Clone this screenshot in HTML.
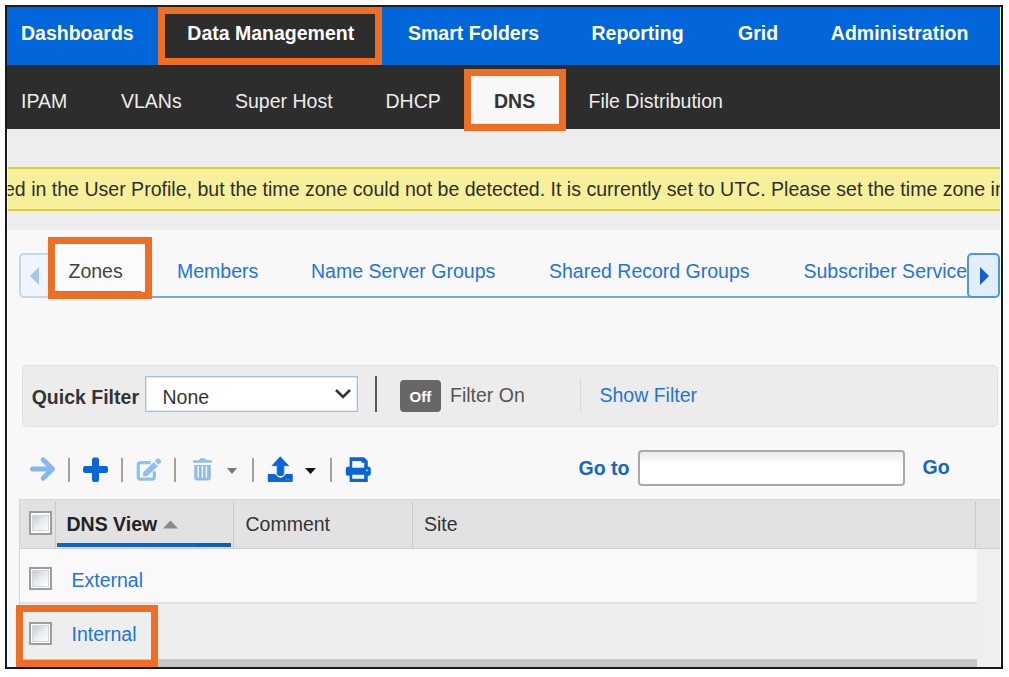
<!DOCTYPE html>
<html><head><meta charset="utf-8">
<style>
*{box-sizing:border-box;margin:0;padding:0}
html,body{width:1009px;height:677px;overflow:hidden;background:#fff}
body{position:relative;font-family:"Liberation Sans",sans-serif;font-size:19.5px;line-height:1}
.a{position:absolute}
.t{position:absolute;white-space:nowrap;line-height:1}
.b{font-weight:bold}
.frame{left:5px;top:5px;width:998px;height:664px;border:2px solid #141b1f;background:#fff}
.ob{position:absolute;border:7px solid #f06e24}
</style></head>
<body>
<div class="a frame"></div>
<!-- top nav -->
<div class="a" style="left:7px;top:7px;width:993px;height:58px;background:#0066d9"></div>
<div class="a" style="left:158px;top:7px;width:224px;height:58px;background:#2d2d2d"></div>
<div class="t b" style="left:21px;top:23.5px;color:#fff">Dashboards</div>
<div class="t b" style="left:187.3px;top:23.5px;color:#fff">Data Management</div>
<div class="t b" style="left:408px;top:23.5px;color:#fff">Smart Folders</div>
<div class="t b" style="left:591.5px;top:23.5px;color:#fff">Reporting</div>
<div class="t b" style="left:738px;top:23.5px;color:#fff">Grid</div>
<div class="t b" style="left:830.8px;top:23.5px;color:#fff">Administration</div>
<!-- sub nav -->
<div class="a" style="left:7px;top:65px;width:993px;height:64px;background:#2d2d2d"></div>
<div class="a" style="left:7px;top:65px;width:993px;height:1px;background:#1f2529"></div>
<div class="a" style="left:464px;top:69px;width:102px;height:62px;background:#f8f8f8"></div>
<div class="t" style="left:21px;top:91.5px;color:#ececec">IPAM</div>
<div class="t" style="left:121px;top:91.5px;color:#ececec">VLANs</div>
<div class="t" style="left:235px;top:91.5px;color:#ececec">Super Host</div>
<div class="t" style="left:385.5px;top:91.5px;color:#ececec">DHCP</div>
<div class="t b" style="left:494px;top:91.5px;color:#333">DNS</div>
<div class="t" style="left:588.5px;top:91.5px;color:#ececec">File Distribution</div>
<!-- gray area + banner -->
<div class="a" style="left:7px;top:129px;width:993px;height:101px;background:#ededed"></div>
<div class="a" style="left:7px;top:167px;width:993px;height:44px;background:#f6f09a;border-top:2px solid #dbcd3c;border-bottom:2px solid #dbcd3c;overflow:hidden">
  <div class="t" style="left:-3px;top:10.7px;color:#2e2e2e;font-size:19.56px">ed in the User Profile, but the time zone could not be detected. It is currently set to UTC. Please set the time zone in the User Profile.</div>
</div>
<!-- content -->
<div class="a" style="left:7px;top:230px;width:993px;height:437px;background:#f8f8f8"></div>
<!-- tabs -->
<div class="a" style="left:57px;top:296px;width:920px;height:2px;background:#6eabe8"></div>
<div class="a" style="left:19px;top:253px;width:33px;height:45px;background:#eef5fc;border:2px solid #c2d8ec;border-radius:5px"></div>
<svg class="a" style="left:29px;top:267px" width="11" height="18"><path d="M10 0 L1 9 L10 18 Z" fill="#a3c6ea"/></svg>
<div class="a" style="left:55px;top:244px;width:90px;height:48px;background:#fbfbfb"></div>
<div class="a" style="left:55px;top:291px;width:86px;height:2px;background:#4a8ee0"></div>
<div class="t" style="left:68.5px;top:261.5px;color:#444">Zones</div>
<div class="t" style="left:177px;top:261.5px;color:#1f73e0">Members</div>
<div class="t" style="left:311px;top:261.5px;color:#1f73e0">Name Server Groups</div>
<div class="t" style="left:549px;top:261.5px;color:#1f73e0">Shared Record Groups</div>
<div class="a" style="left:7px;top:240px;width:960px;height:50px;overflow:hidden">
  <div class="t" style="left:796.5px;top:21.5px;color:#1f73e0">Subscriber Services</div>
</div>
<div class="a" style="left:967px;top:253px;width:33px;height:45px;background:#e2eefc;border:2px solid #4f95e3;border-radius:5px"></div>
<svg class="a" style="left:979px;top:267px" width="11" height="18"><path d="M1 0 L10 9 L1 18 Z" fill="#0b62d6"/></svg>
<!-- filter bar -->
<div class="a" style="left:22px;top:365px;width:976px;height:62px;background:#ececec;border:1px solid #dedede;border-radius:5px"></div>
<div class="t b" style="left:31.7px;top:388px;color:#333">Quick Filter</div>
<div class="a" style="left:145px;top:376px;width:213px;height:36px;background:#fff;border:1px solid #9fc2ee;box-shadow:inset 0 0 0 1px #dce9f8"></div>
<div class="t" style="left:162.5px;top:387.5px;color:#333">None</div>
<svg class="a" style="left:334px;top:388px" width="18" height="12"><path d="M2 2 L9 9 L16 2" fill="none" stroke="#333" stroke-width="2.6"/></svg>
<div class="a" style="left:375px;top:376px;width:2px;height:36px;background:#555"></div>
<div class="a" style="left:400px;top:380px;width:41px;height:32px;background:#676767;border-radius:4px"></div>
<div class="t b" style="left:409.5px;top:388.5px;color:#fff;font-size:15px">Off</div>
<div class="t" style="left:450px;top:385.5px;color:#555">Filter On</div>
<div class="a" style="left:580px;top:379px;width:1px;height:33px;background:#d6d6d6"></div>
<div class="t" style="left:599.5px;top:385.5px;color:#1f73e0">Show Filter</div>
<!-- toolbar -->
<svg class="a" style="left:28px;top:455px" width="30" height="28"><path d="M4.6 14 H24.5 M15.2 4.8 L24.5 14 L15.2 23.2" fill="none" stroke="#85b8ee" stroke-width="5" stroke-linecap="round" stroke-linejoin="round"/></svg>
<div class="a" style="left:68px;top:458px;width:2px;height:24px;background:#a8a294"></div>
<svg class="a" style="left:82px;top:456px" width="28" height="28"><rect x="1" y="10" width="25" height="7" rx="2.2" fill="#0a66d8"/><rect x="10" y="1.4" width="7" height="24.5" rx="2.2" fill="#0a66d8"/></svg>
<div class="a" style="left:121px;top:458px;width:2px;height:24px;background:#a8a294"></div>
<svg class="a" style="left:132px;top:454px" width="34" height="30"><path d="M18.6 8.7 H8.75 Q6.25 8.7 6.25 11.2 V22.7 Q6.25 25.2 8.75 25.2 H19.8 Q22.3 25.2 22.3 22.7 V17.3" fill="none" stroke="#8fbfee" stroke-width="3.2"/><path d="M11.3 18.6 L21.7 8.4 L25.5 12.2 L15.1 21.9 L11.8 21.9 Q11.3 21.9 11.3 21.4 Z" fill="#8fbfee" stroke="#8fbfee" stroke-width="0.6" stroke-linejoin="round"/><rect x="-2.3" y="-2.8" width="4.6" height="5.6" rx="1.5" fill="#8fbfee" transform="translate(26.2 7.3) rotate(-45)"/></svg>
<div class="a" style="left:174px;top:458px;width:2px;height:24px;background:#a8a294"></div>
<svg class="a" style="left:188px;top:454px" width="30" height="30"><rect x="4.9" y="6.2" width="19.2" height="2.5" rx="1.2" fill="#8ebde9"/><path d="M10.6 6.6 L11.9 4.7 Q12.2 4.2 12.8 4.2 H16.3 Q16.9 4.2 17.2 4.7 L18.5 6.6 Z" fill="#8ebde9"/><path d="M6.2 10.9 H22.8 V23.6 Q22.8 26.6 19.8 26.6 H9.2 Q6.2 26.6 6.2 23.6 Z" fill="#8ebde9"/><path d="M10.2 12.6 V23.3 M14.4 12.6 V23.3 M18.4 12.6 V23.3" stroke="#eef5fc" stroke-width="1.5" stroke-linecap="round"/></svg>
<svg class="a" style="left:227px;top:468px" width="10" height="6"><path d="M0 0 H10 L5 6 Z" fill="#777"/></svg>
<div class="a" style="left:252px;top:458px;width:2px;height:24px;background:#a8a294"></div>
<svg class="a" style="left:264px;top:454px" width="32" height="32"><path d="M16.3 2.8 L24.6 11.7 H19.8 V19.5 Q19.8 21.5 17.8 21.5 H15.2 Q13.2 21.5 13.2 19.5 V11.7 H8 Z" fill="#0a66d9" stroke="#0a66d9" stroke-width="0.8" stroke-linejoin="round"/><path d="M4.6 20.1 H10.6 Q11.6 20.1 12.2 21.1 Q13.6 23.7 16.5 23.7 Q19.4 23.7 20.8 21.1 Q21.4 20.1 22.4 20.1 H28 Q28.8 20.1 28.8 20.9 V27.1 Q28.8 27.9 28 27.9 H4.6 Q3.8 27.9 3.8 27.1 V20.9 Q3.8 20.1 4.6 20.1 Z" fill="#0a66d9"/><circle cx="22.6" cy="25.7" r="0.8" fill="#5d9be6"/><circle cx="24.9" cy="25.7" r="0.8" fill="#5d9be6"/></svg>
<svg class="a" style="left:305px;top:468px" width="11" height="6"><path d="M0 0 H11 L5.5 6 Z" fill="#111"/></svg>
<div class="a" style="left:330px;top:458px;width:2px;height:24px;background:#a8a294"></div>
<svg class="a" style="left:342px;top:454px" width="32" height="32"><path fill="#0a66d8" fill-rule="evenodd" d="M7.6 3.3 H22.2 L25.8 7.1 V12.8 H26.8 Q28.8 12.8 28.8 14.8 V19.7 Q28.8 21.7 26.8 21.7 H25.8 V27.9 H7.6 V21.7 H5.8 Q3.8 21.7 3.8 19.7 V14.8 Q3.8 12.8 5.8 12.8 H7.6 Z M10.2 6.9 H19.4 V8.7 H22.2 V13.7 H10.2 Z M10.2 20.8 H22.2 V24.8 H10.2 Z"/><ellipse cx="25" cy="16.4" rx="1.3" ry="0.8" fill="#a9cbf3"/></svg>
<div class="t b" style="left:578.5px;top:458.5px;color:#1166c6">Go to</div>
<div class="a" style="left:638px;top:450px;width:267px;height:36px;background:linear-gradient(#e9ebec,#fff 40%);border:2px solid #a9a9a9;border-radius:4px"></div>
<div class="t b" style="left:922.5px;top:458px;color:#1166c6">Go</div>
<!-- grid -->
<div class="a" style="left:19px;top:499px;width:981px;height:168px;background:#f8f8f8;border-left:1px solid #d6d6d6;border-top:1px solid #d6d6d6"></div>
<div class="a" style="left:20px;top:500px;width:980px;height:49px;background:#e2e2e2;border-bottom:1px solid #d0d0d0"></div>
<div class="a" style="left:28.5px;top:511px;width:23.5px;height:23.5px;border:2px solid #9d9d9d;background:#fbfbfb;padding:1.5px"><div style="width:100%;height:100%;border:1px solid #d4d6da;background:linear-gradient(135deg,#c3c9d3,#e9ecf0 50%,#fdfdfd)"></div></div>
<div class="a" style="left:55px;top:502px;width:1px;height:47px;background:#c9c9c9"></div>
<div class="t b" style="left:66.5px;top:515px;color:#222">DNS View</div>
<svg class="a" style="left:163px;top:520px" width="15" height="9"><path d="M0 8.5 L7.5 0.5 L15 8.5 Z" fill="#8a8a8a"/></svg>
<div class="a" style="left:57px;top:543px;width:174px;height:4px;background:#0a66d8"></div>
<div class="a" style="left:196px;top:543px;width:35px;height:4px;background:#0b5ec4"></div>
<div class="a" style="left:233px;top:502px;width:1px;height:47px;background:#c9c9c9"></div>
<div class="t" style="left:245.5px;top:515px;color:#333">Comment</div>
<div class="a" style="left:412px;top:502px;width:1px;height:47px;background:#c9c9c9"></div>
<div class="t" style="left:424px;top:515px;color:#333">Site</div>
<div class="a" style="left:975px;top:502px;width:1px;height:47px;background:#c9c9c9"></div>
<!-- rows -->
<div class="a" style="left:20px;top:549px;width:957px;height:53px;background:#f9f9f9"></div>
<div class="a" style="left:20px;top:602px;width:957px;height:2px;background:#e2e2e2"></div>
<div class="a" style="left:20px;top:604px;width:957px;height:55px;background:#eeeeee"></div>
<div class="a" style="left:20px;top:659px;width:957px;height:8px;background:#c6c6c6"></div>
<div class="a" style="left:977px;top:549px;width:23px;height:118px;background:#efefef"></div>
<div class="a" style="left:28.5px;top:566.5px;width:23.5px;height:23.5px;border:2px solid #9d9d9d;background:#fbfbfb;padding:1.5px"><div style="width:100%;height:100%;border:1px solid #d4d6da;background:linear-gradient(135deg,#c3c9d3,#e9ecf0 50%,#fdfdfd)"></div></div>
<div class="t" style="left:71.5px;top:570.5px;color:#1f73e0">External</div>
<div class="a" style="left:28.5px;top:621.5px;width:23.5px;height:23.5px;border:2px solid #9d9d9d;background:#fbfbfb;padding:1.5px"><div style="width:100%;height:100%;border:1px solid #d4d6da;background:linear-gradient(135deg,#c3c9d3,#e9ecf0 50%,#fdfdfd)"></div></div>
<div class="t" style="left:71.5px;top:625px;color:#1f73e0">Internal</div>
<div class="a" style="left:7px;top:129px;width:1px;height:538px;background:rgba(255,255,255,0.7)"></div>
<!-- frame border on top -->
<div class="a" style="left:5px;top:5px;width:998px;height:664px;border:2px solid #141b1f;border-top-color:#1c2124"></div>
<div class="a" style="left:1000px;top:7px;width:1px;height:660px;background:#fff"></div>
<!-- orange highlight boxes -->
<div class="ob" style="left:158px;top:7px;width:224px;height:58px"></div>
<div class="ob" style="left:464px;top:69px;width:102px;height:62px"></div>
<div class="ob" style="left:48px;top:237px;width:104px;height:62px"></div>
<div class="ob" style="left:16px;top:605px;width:142px;height:62px"></div>
</body></html>
